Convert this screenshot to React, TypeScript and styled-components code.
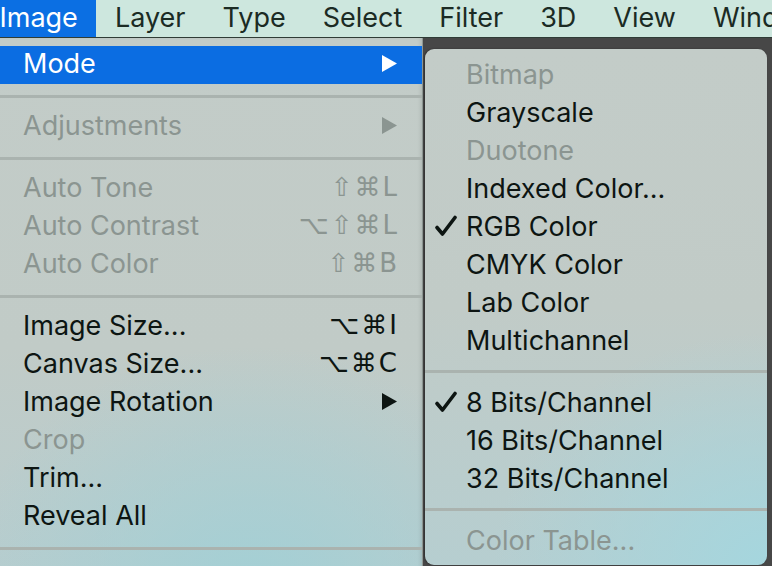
import React from "react";
import styled, { createGlobalStyle, css } from "styled-components";

const GlobalStyle = createGlobalStyle`
   html, body {
      margin: 0;
      padding: 0;
      background-color: #464646;
   }
   body {
      font-family: Inter, "Noto Sans", "DejaVu Sans", sans-serif;
      -webkit-font-smoothing: antialiased;
   }
`;

const Screen = styled.div`
   width: 772px;
   height: 566px;
   overflow: hidden;
   display: flex;
   flex-direction: column;
   background-color: #474747;
`;

const Bar = styled.nav`
   flex: 0 0 37px;
   background-color: #cde7de;
   border-bottom: 1px solid #2f3c36;
   overflow: hidden;
`;

const BarList = styled.ul`
   display: flex;
   margin: 0 0 0 -19px;
   padding: 0;
   list-style: none;
   white-space: nowrap;
`;

const BarItem = styled.li<{ $active?: boolean }>`
   padding: 0 18.5px;
   height: 37px;
   line-height: 35px;
   font-size: 27px;
   color: #1b2b24;
   ${(p) =>
      p.$active &&
      css`
         background-color: #0b6fe3;
         color: #fff;
      `}
`;

const Body = styled.div`
   flex: 1;
   display: flex;
   align-items: flex-start;
`;

const MainMenu = styled.ul`
   width: 423px;
   height: 560px;
   margin: 0;
   padding: 8px 0;
   box-sizing: border-box;
   list-style: none;
   border-right: 1px solid #8f9894;
   box-shadow: inset -3px 0 4px -2px rgba(0, 0, 0, 0.12);
   background:
      radial-gradient(ellipse 70% 45% at 60% 100%, rgba(160, 208, 214, 0.9), rgba(160, 208, 214, 0) 100%),
      linear-gradient(180deg, #c3ccc8 0%, #c1cbc7 55%, #b7cdcf 100%);
`;

const Pane = styled.div`
   flex: 1;
   padding: 11px 0 0 2px;
`;

const SubMenu = styled.ul`
   width: 342px;
   margin: 0;
   padding: 6px 0;
   list-style: none;
   border-radius: 9px;
   box-shadow: -1px 0 2px rgba(0, 0, 0, 0.35);
   background:
      radial-gradient(ellipse 80% 45% at 100% 100%, rgba(165, 214, 222, 1), rgba(165, 214, 222, 0) 100%),
      linear-gradient(180deg, #c3ccc8 0%, #c1cbc7 50%, #b6ced0 100%);
`;

const Row = styled.li<{ $disabled?: boolean; $active?: boolean; $sub?: boolean }>`
   height: 38px;
   box-sizing: border-box;
   display: flex;
   align-items: center;
   padding: ${(p) => (p.$sub ? "0 20px 0 10px" : "0 25px 4px 23px")};
   font-size: 27px;
   color: ${(p) => (p.$disabled ? "#8b9591" : "#0d1512")};
   white-space: nowrap;
   ${(p) =>
      p.$active &&
      css`
         background-color: #0b6de2;
         color: #fff;
      `}
`;

const Label = styled.span`
   flex: 1;
`;

const Shortcut = styled.span`
   font-family: "DejaVu Sans", Inter, sans-serif;
   font-size: 26px;
   letter-spacing: 2px;
   margin-right: -2px;
`;

const CheckSlot = styled.span`
   flex: 0 0 31px;
   display: flex;
   align-items: center;
`;

const Separator = styled.li`
   height: 24px;
   display: flex;
   align-items: center;
   &::after {
      content: "";
      flex: 1;
      height: 3px;
      background-color: #aab3af;
   }
`;

type Entry =
   | "sep"
   | {
        label: string;
        shortcut?: string;
        disabled?: boolean;
        active?: boolean;
        submenu?: boolean;
        checked?: boolean;
     };

const menuBar = ["Image", "Layer", "Type", "Select", "Filter", "3D", "View", "Window"];

const imageMenu: Entry[] = [
   { label: "Mode", submenu: true, active: true },
   "sep",
   { label: "Adjustments", submenu: true, disabled: true },
   "sep",
   { label: "Auto Tone", shortcut: "⇧⌘L", disabled: true },
   { label: "Auto Contrast", shortcut: "⌥⇧⌘L", disabled: true },
   { label: "Auto Color", shortcut: "⇧⌘B", disabled: true },
   "sep",
   { label: "Image Size...", shortcut: "⌥⌘I" },
   { label: "Canvas Size...", shortcut: "⌥⌘C" },
   { label: "Image Rotation", submenu: true },
   { label: "Crop", disabled: true },
   { label: "Trim..." },
   { label: "Reveal All" },
   "sep",
   { label: "Duplicate..." },
];

const modeMenu: Entry[] = [
   { label: "Bitmap", disabled: true },
   { label: "Grayscale" },
   { label: "Duotone", disabled: true },
   { label: "Indexed Color..." },
   { label: "RGB Color", checked: true },
   { label: "CMYK Color" },
   { label: "Lab Color" },
   { label: "Multichannel" },
   "sep",
   { label: "8 Bits/Channel", checked: true },
   { label: "16 Bits/Channel" },
   { label: "32 Bits/Channel" },
   "sep",
   { label: "Color Table...", disabled: true },
];

const Arrow = () => (
   <svg width="15" height="17" viewBox="0 0 15 17">
      <path d="M0 0 L15 8.5 L0 17 Z" fill="currentColor" />
   </svg>
);

const Check = () => (
   <svg width="22" height="22" viewBox="0 0 22 22">
      <path d="M2 12.5 L7.5 19 L20 2.5" fill="none" stroke="#0d1512" strokeWidth="3.6" strokeLinecap="round" strokeLinejoin="round" />
   </svg>
);

function MenuRows({ entries, sub }: { entries: Entry[]; sub?: boolean }) {
   return (
      <>
         {entries.map((entry, index) =>
            entry === "sep" ? (
               <Separator key={index} />
            ) : (
               <Row key={index} $disabled={entry.disabled} $active={entry.active} $sub={sub}>
                  {sub && <CheckSlot>{entry.checked && <Check />}</CheckSlot>}
                  <Label>{entry.label}</Label>
                  {entry.shortcut && <Shortcut>{entry.shortcut}</Shortcut>}
                  {entry.submenu && <Arrow />}
               </Row>
            )
         )}
      </>
   );
}

function App() {
   return (
      <Screen>
         <GlobalStyle />
         <Bar>
            <BarList>
               {menuBar.map((name) => (
                  <BarItem key={name} $active={name === "Image"}>
                     {name}
                  </BarItem>
               ))}
            </BarList>
         </Bar>
         <Body>
            <MainMenu>
               <MenuRows entries={imageMenu} />
            </MainMenu>
            <Pane>
               <SubMenu>
                  <MenuRows entries={modeMenu} sub />
               </SubMenu>
            </Pane>
         </Body>
      </Screen>
   );
}

export default App;
